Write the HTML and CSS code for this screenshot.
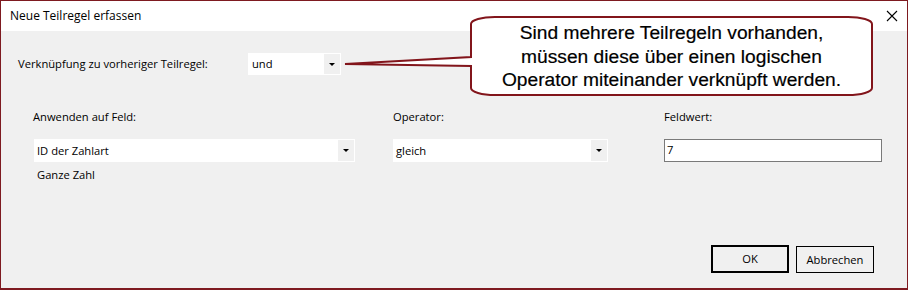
FILE: index.html
```html
<!DOCTYPE html>
<html>
<head>
<meta charset="utf-8">
<link rel="stylesheet" href="styles.css">
</head>
<body>
<div class="window">
  <div class="titlebar">
    <span class="title">Neue Teilregel erfassen</span>
    <svg class="close" width="12" height="12" viewBox="0 0 12 12"><path d="M1 1 L11 11 M11 1 L1 11" stroke="#000" stroke-width="1.1" fill="none"/></svg>
  </div>
  <div class="content">
    <div class="row-link">
      <span class="lbl-link">Verknüpfung zu vorheriger Teilregel:</span>
      <div class="combo combo-und"><span class="val">und</span><span class="drop"><span class="arrow"></span></span></div>
    </div>
    <div class="fields">
      <div class="field f-feld">
        <div class="lbl">Anwenden auf Feld:</div>
        <div class="combo"><span class="val">ID der Zahlart</span><span class="drop"><span class="arrow"></span></span></div>
        <div class="hint">Ganze Zahl</div>
      </div>
      <div class="field f-op">
        <div class="lbl">Operator:</div>
        <div class="combo"><span class="val">gleich</span><span class="drop"><span class="arrow"></span></span></div>
      </div>
      <div class="field f-wert">
        <div class="lbl">Feldwert:</div>
        <div class="textbox">7</div>
      </div>
    </div>
    <div class="buttons">
      <div class="btn btn-ok">OK</div>
      <div class="btn">Abbrechen</div>
    </div>
  </div>
  <div class="callout">
    <svg class="callout-shape" width="536" height="84" viewBox="0 0 536 84">
      <path d="M155 3 H508 A24 7 0 0 1 532 10 V74 A24 7 0 0 1 508 81 H155 A24 7 0 0 1 131 74 V52 L5 50 L131 43 V10 A24 7 0 0 1 155 3 Z" fill="#fff" stroke="#82151b" stroke-width="2" stroke-linejoin="miter"/>
    </svg>
    <div class="callout-text">Sind mehrere Teilregeln vorhanden,<br>müssen diese über einen logischen<br>Operator miteinander verknüpft werden.</div>
  </div>
</div>
</body>
</html>
```
FILE: styles.css
```css
html, body {
  margin: 0;
  padding: 0;
}
body {
  width: 908px;
  height: 290px;
  overflow: hidden;
  font-family: "Open Sans", "Noto Sans", sans-serif;
  font-size: 11.2px;
  color: #000;
}
.window {
  position: relative;
  box-sizing: border-box;
  width: 908px;
  height: 290px;
  border: 1px solid #7e1a20;
  border-bottom-width: 2px;
  background: #f0f0f0;
  display: flex;
  flex-direction: column;
}
.titlebar {
  height: 30px;
  background: #fff;
  display: flex;
  align-items: center;
  justify-content: space-between;
  padding: 0 9px 0 9px;
  flex: none;
}
.title {
  font-size: 12px;
  line-height: 16px;
}
.close {
  display: block;
  margin-top: -1px;
}
.content {
  flex: 1;
  display: flex;
  flex-direction: column;
  padding: 22px 33px 15px 17px;
}
.row-link {
  display: flex;
  align-items: center;
  height: 22px;
}
.lbl-link {
  width: 230px;
  line-height: 16px;
}
.combo {
  box-sizing: border-box;
  background: #fff;
  border: 1px solid #fff;
  display: flex;
  align-items: center;
  height: 23px;
}
.combo .val {
  flex: 1;
  padding-left: 2px;
  line-height: 16px;
}
.combo .drop {
  width: 16px;
  align-self: stretch;
  background: #f0f0f0;
  display: flex;
  align-items: center;
  justify-content: center;
}
.arrow {
  width: 0;
  height: 0;
  border-left: 3px solid transparent;
  border-right: 3px solid transparent;
  border-top: 3px solid #000;
}
.combo-und {
  width: 93px;
  height: 22px;
}
.combo-und .val {
  padding-left: 3px;
}
.fields {
  display: flex;
  margin-top: 34px;
  padding-left: 15px;
}
.field {
  display: flex;
  flex-direction: column;
  flex: none;
}
.lbl {
  line-height: 16px;
  margin-bottom: 14px;
}
.f-feld {
  width: 322px;
}
.f-feld .combo {
  margin-left: 1px;
}
.f-op {
  width: 215px;
  margin-left: 38px;
}
.f-wert {
  width: 218px;
  margin-left: 56px;
}
.hint {
  line-height: 16px;
  margin-top: 5px;
  padding-left: 4px;
}
.textbox {
  box-sizing: border-box;
  height: 23px;
  background: #fff;
  border: 1px solid #7a7a7a;
  padding-left: 2px;
  line-height: 20px;
}
.buttons {
  margin-top: auto;
  display: flex;
  justify-content: flex-end;
  gap: 7px;
}
.btn {
  box-sizing: border-box;
  width: 78px;
  height: 27px;
  border: 1px solid #000;
  background: #f0f0f0;
  display: flex;
  align-items: center;
  justify-content: center;
  line-height: 16px;
}
.btn-ok {
  border-width: 2px;
  height: 28px;
  margin-top: -1px;
}
.callout {
  position: absolute;
  left: 339px;
  top: 13px;
  width: 536px;
  height: 84px;
}
.callout-shape {
  display: block;
}
.callout-text {
  position: absolute;
  left: 131px;
  top: 7px;
  width: 401px;
  text-align: center;
  font-family: "Liberation Sans", Arial, sans-serif;
  font-size: 19.2px;
  line-height: 23.5px;
  -webkit-text-stroke: 0.2px #000;
}
```
